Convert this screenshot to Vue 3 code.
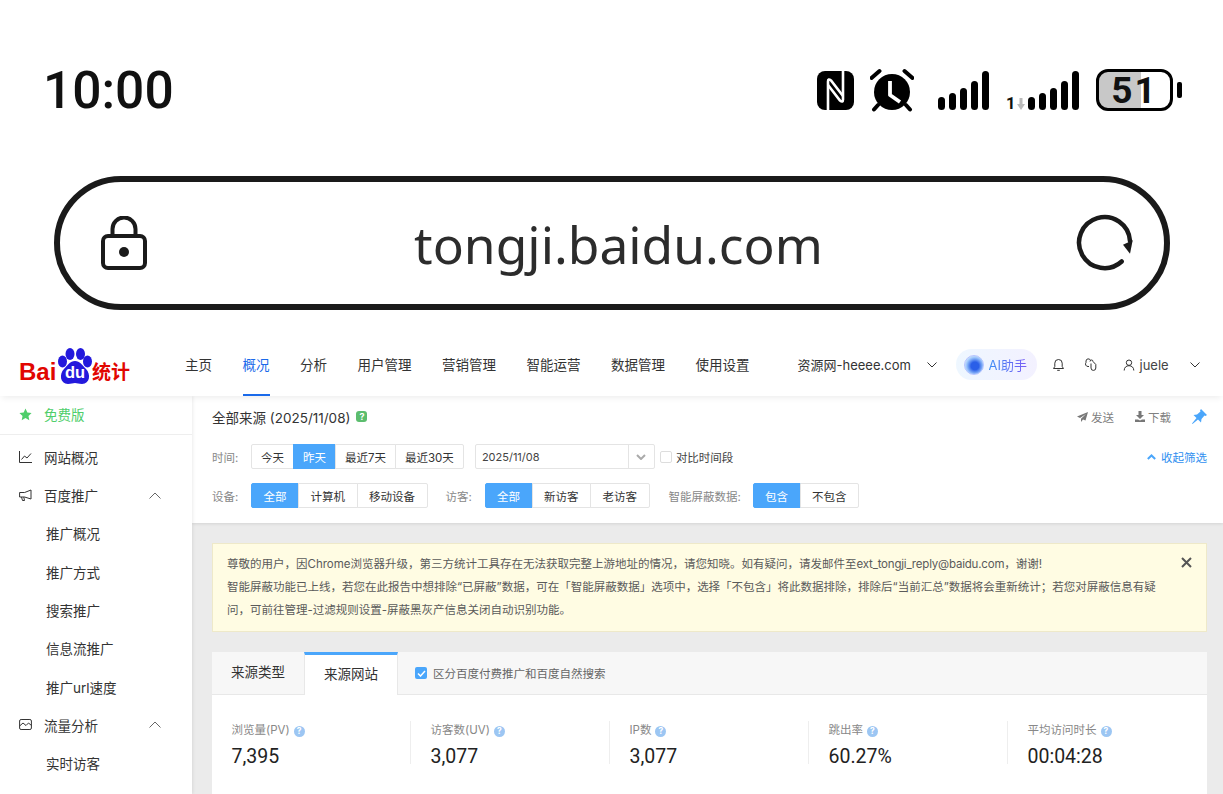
<template>
  <div class="page">
    <div class="status">
      <span class="time">10:00</span>
      <div class="status-icons">
        <svg class="nfc" width="37" height="39" viewBox="0 0 37 39">
          <rect width="37" height="39" rx="8" fill="#000" />
          <path d="M11 39V10.500Q11 7 14 9.500L26 25" fill="none" stroke="#fff" stroke-width="2.600" />
          <path d="M26 0V28.500Q26 32 23 29.500L11 14" fill="none" stroke="#fff" stroke-width="2.600" />
        </svg>
        <svg class="alarm" width="44" height="44" viewBox="0 0 44 44">
          <circle cx="22" cy="24" r="18" fill="#000" />
          <path d="M20 13v14l10 7" fill="none" stroke="#fff" stroke-width="3.800" stroke-linejoin="round" />
          <path d="M1.500 10 9.500 3M42.500 10 34.500 3M8 37l-4 4.500M36 37l4 4.500" stroke="#000" stroke-width="4" stroke-linecap="round" />
        </svg>
        <svg class="signal" width="52" height="42" viewBox="0 0 52 42">
          <rect v-for="b in bars" :key="b.x" :x="b.x" :y="b.y" width="7" :height="41 - b.y" rx="3.500" />
        </svg>
        <div class="signal2">
          <span class="net">1<svg width="8" height="12" viewBox="0 0 8 12"><path d="M2.500 0h3v6H8L4 12 0 6h2.500z" fill="#bbb" /></svg></span>
          <svg width="52" height="42" viewBox="0 0 52 42">
            <rect v-for="b in bars" :key="b.x" :x="b.x" :y="b.y" width="7" :height="41 - b.y" rx="3.500" />
          </svg>
        </div>
        <div class="battery"><span>51</span></div>
        <div class="nub"></div>
      </div>
    </div>

    <div class="urlbar">
      <svg width="46" height="54" viewBox="0 0 46 54" fill="none" stroke="#1a1a1a" stroke-width="4">
        <path d="M11.500 20V13a11.500 11.500 0 0 1 23 0v7" />
        <rect x="2" y="20" width="42" height="32" rx="5" />
        <circle cx="23" cy="36" r="5" fill="#1a1a1a" stroke="none" />
      </svg>
      <span class="host">tongji.baidu.com</span>
      <svg width="60" height="58" viewBox="0 0 60 58" fill="none" stroke="#1a1a1a" stroke-width="4.500">
        <path d="M45.700 47.500A25.500 25.500 0 1 1 54 27" stroke-linecap="round" />
        <path d="M47 30.700 56.700 26.300 54 39.700z" fill="#1a1a1a" stroke="none" />
      </svg>
    </div>

    <header class="nav">
      <div class="logo">
        <span class="logo-bai">Bai</span>
        <div class="paw">
          <svg width="34" height="36" viewBox="0 0 34 36" fill="#2319dc">
            <ellipse cx="4.500" cy="13.500" rx="4.500" ry="6" />
            <ellipse cx="12" cy="6" rx="4.500" ry="6" />
            <ellipse cx="22.500" cy="6" rx="4.500" ry="6" />
            <ellipse cx="29.500" cy="13.500" rx="4.500" ry="6" />
            <path d="M17 13c5 0 7 4 11 8 5 5 4 15-4 15-3 0-5-1-7-1s-4 1-7 1c-8 0-9-10-4-15 4-4 6-8 11-8z" />
          </svg>
          <span class="logo-du">du</span>
        </div>
        <span class="logo-tj">统计</span>
      </div>
      <nav class="menu">
        <a v-for="m in menu" :key="m" :class="{ active: m === '概况' }">{{ m }}</a>
      </nav>
      <div class="nav-right">
        <span class="site">资源网-heeee.com</span>
        <svg class="chev" width="10" height="6" viewBox="0 0 10 6"><path d="M.5.500 5 5 9.500.5" /></svg>
        <div class="ai">
          <span class="ai-dot"></span>
          <span class="ai-text">AI助手</span>
        </div>
        <svg class="bell" width="13" height="13" viewBox="0 0 13 13" fill="none" stroke="#333">
          <path d="M1.500 10.500h10l-1.300-2V5.200a3.700 3.700 0 0 0-7.400 0v3.300zM5.200 12.300h2.600" />
        </svg>
        <svg class="link" width="12" height="13" viewBox="0 0 12 13" fill="none" stroke="#333">
          <path d="M4 8.500H3A2.500 2.500 0 0 1 1 4.500V3a2.300 2.300 0 0 1 4.500-.5" />
          <path d="M5 3.500a1.500 1.500 0 0 1 3 0l2.800 3v3.500a2.400 2.400 0 0 1-4.800 0V5.500" />
        </svg>
        <svg class="user" width="12" height="12" viewBox="0 0 12 12" fill="none" stroke="#333">
          <circle cx="6" cy="3.700" r="2.700" />
          <path d="M1.200 11.500c0-3 2-4.800 4.800-4.800s4.800 1.800 4.800 4.800" />
        </svg>
        <span class="uname">juele</span>
        <svg class="chev last" width="10" height="6" viewBox="0 0 10 6"><path d="M.5.500 5 5 9.500.5" /></svg>
      </div>
    </header>

    <div class="body">
      <aside class="side">
        <div class="free">
          <svg width="13" height="13" viewBox="0 0 24 24" fill="#4fce6b"><path d="m12 1 3.400 7.200 7.800 1-5.700 5.400 1.500 7.800-7-3.800-7 3.800 1.500-7.800L.8 9.200l7.800-1z" /></svg>
          <span>免费版</span>
        </div>
        <div class="side-list">
          <div class="side-item">
            <svg class="side-ic" width="13" height="13" viewBox="0 0 13 13"><path d="M.5 1v11.500H13M2.500 9.500 5.500 6l2.500 2L12 3.500" /></svg>
            网站概况
          </div>
          <div class="side-item">
            <svg class="side-ic" width="13" height="13" viewBox="0 0 13 13"><path d="M.6 3.500h5L12 1v9L5.600 8H.6zM2.500 8l1 3.500h2L4.800 8" /></svg>
            百度推广
            <svg class="up" width="12" height="7" viewBox="0 0 12 7"><path d="M.5 6.500 6 1l5.500 5.500" /></svg>
          </div>
          <div v-for="s in promo" :key="s" class="side-sub">{{ s }}</div>
          <div class="side-item">
            <svg class="side-ic" width="13" height="13" viewBox="0 0 13 13"><rect x=".6" y="1.500" width="11.800" height="10" rx="1.500" /><path d="M.6 8 4 5l3 2.500L9.500 5l3 2.500" /></svg>
            流量分析
            <svg class="up" width="12" height="7" viewBox="0 0 12 7"><path d="M.5 6.500 6 1l5.500 5.500" /></svg>
          </div>
          <div class="side-sub">实时访客</div>
        </div>
      </aside>

      <main class="main">
        <section class="filters">
          <div class="title-row">
            <span class="title">全部来源 (2025/11/08)</span>
            <span class="help-green">?</span>
            <div class="actions">
              <span class="act">
                <svg width="11" height="10" viewBox="0 0 11 10" fill="#777"><path d="M11 0 0 4.500l3 1.500L9 2 4 6.700V10l2-2.500 2.500 1z" /></svg>
                发送
              </span>
              <span class="act">
                <svg width="10" height="11" viewBox="0 0 10 11" fill="#777"><path d="M3.500 0h3v4H9L5 8 1 4h2.500zM0 8.500h3l2 1 2-1h3V11H0z" /></svg>
                下载
              </span>
              <svg class="pin" width="16" height="16" viewBox="0 0 16 16" fill="#4aa6fb"><path d="M10 0l6 6-1.500 1-1-.5L10.500 10l-.5 3.500L7 10.500 1.500 15 1 14.500 5.500 9 2.500 6 6 5.500l3.500-3-.5-1z" /></svg>
            </div>
          </div>

          <div class="row first">
            <span class="lab">时间:</span>
            <div class="group">
              <button v-for="t in times" :key="t" class="tight" :class="{ on: t === '昨天' }">{{ t }}</button>
            </div>
            <div class="date">
              <span>2025/11/08</span>
              <i class="date-arrow"><svg width="10" height="6" viewBox="0 0 10 6"><path d="M1 1l4 4 4-4" /></svg></i>
            </div>
            <span class="check"></span>
            <span class="check-label">对比时间段</span>
            <span class="collapse">
              <svg width="9" height="6" viewBox="0 0 9 6"><path d="M.8 5 4.500 1.500 8.200 5" /></svg>
              收起筛选
            </span>
          </div>

          <div class="row">
            <span class="lab">设备:</span>
            <div class="group">
              <button v-for="t in devices" :key="t" :class="{ on: t === '全部' }">{{ t }}</button>
            </div>
            <span class="lab lab2">访客:</span>
            <div class="group">
              <button v-for="t in visitors" :key="t" :class="{ on: t === '全部' }">{{ t }}</button>
            </div>
            <span class="lab lab3">智能屏蔽数据:</span>
            <div class="group">
              <button v-for="t in blocks" :key="t" :class="{ on: t === '包含' }">{{ t }}</button>
            </div>
          </div>
        </section>

        <div class="content">
          <div class="notice">
            <p>
              尊敬的用户，因Chrome浏览器升级，第三方统计工具存在无法获取完整上游地址的情况，请您知晓。如有疑问，请发邮件至<span class="mail">ext_tongji_reply@baidu.com</span>，谢谢!<br />
              智能屏蔽功能已上线，若您在此报告中想排除“已屏蔽”数据，可在「智能屏蔽数据」选项中，选择「不包含」将此数据排除，排除后“当前汇总”数据将会重新统计；若您对屏蔽信息有疑<br />
              问，可前往管理-过滤规则设置-屏蔽黑灰产信息关闭自动识别功能。
            </p>
            <svg class="close" width="11" height="11" viewBox="0 0 11 11"><path d="M1 1l9 9M10 1l-9 9" /></svg>
          </div>

          <div class="card">
            <div class="tabs">
              <div class="tab">来源类型</div>
              <div class="tab cur">来源网站</div>
              <label class="tab-check">
                <span class="tick"><svg width="9" height="7" viewBox="0 0 9 7"><path d="M1 3.500 3.500 6 8 1" /></svg></span>
                区分百度付费推广和百度自然搜索
              </label>
            </div>
            <div class="metrics">
              <div v-for="m in metrics" :key="m.label" class="metric">
                <div class="m-label">{{ m.label }}<span class="help-blue">?</span></div>
                <div class="m-value">{{ m.value }}</div>
              </div>
            </div>
          </div>
        </div>
      </main>
    </div>
  </div>
</template>

<script setup>
const bars = [
  { x: 0, y: 28 },
  { x: 11, y: 24 },
  { x: 22, y: 19 },
  { x: 33, y: 12 },
  { x: 44, y: 2 },
]
const menu = ['主页', '概况', '分析', '用户管理', '营销管理', '智能运营', '数据管理', '使用设置']
const promo = ['推广概况', '推广方式', '搜索推广', '信息流推广', '推广url速度']
const times = ['今天', '昨天', '最近7天', '最近30天']
const devices = ['全部', '计算机', '移动设备']
const visitors = ['全部', '新访客', '老访客']
const blocks = ['包含', '不包含']
const metrics = [
  { label: '浏览量(PV)', value: '7,395' },
  { label: '访客数(UV)', value: '3,077' },
  { label: 'IP数', value: '3,077' },
  { label: '跳出率', value: '60.27%' },
  { label: '平均访问时长', value: '00:04:28' },
]
</script>

<style>
html, body { background: #fff; overflow: hidden; }
</style>

<style scoped>
.page {
  width: 1223px;
  height: 794px;
  overflow: hidden;
  font-family: Inter, "Noto Sans CJK SC", sans-serif;
  color: #333;
  background: #fff;
}
.status {
  height: 176px;
  display: flex;
  align-items: center;
  justify-content: space-between;
  padding: 4px 41px 0 43px;
  box-sizing: border-box;
}
.time { font: 500 51.500px Roboto, sans-serif; color: #111; }
.status-icons { display: flex; align-items: center; }
.alarm { margin-left: 16px; }
.signal { margin-left: 24px; fill: #000; }
.signal2 { display: flex; align-items: flex-end; margin-left: 16px; fill: #000; }
.net {
  font: 700 16.500px Roboto, sans-serif;
  display: flex;
  align-items: flex-end;
  line-height: 12px;
  margin-bottom: 1px;
  gap: 2px;
  width: 22px;
  color: #111;
}
.battery {
  width: 77px;
  height: 42px;
  box-sizing: border-box;
  margin-left: 16px;
  border: 3.500px solid #000;
  border-radius: 12px;
  background: linear-gradient(90deg, #c8c8c8 59%, #fff 59%);
  display: flex;
  align-items: center;
  justify-content: center;
  font: 700 37px/1 Roboto, sans-serif;
  color: #111;
  letter-spacing: 2px;
}
.nub { width: 5px; height: 16px; background: #000; border-radius: 2px; margin-left: 4px; }

.urlbar {
  height: 134px;
  margin: 0 53px 0 54px;
  box-sizing: border-box;
  border: 6px solid #1a1a1a;
  border-radius: 67px;
  display: flex;
  align-items: center;
  justify-content: space-between;
  padding: 0 28px 0 41px;
}
.host {
  font: 400 51.500px "Noto Sans", sans-serif;
  color: #2c2c2c;
  margin: 2px 0 0 14px;
}

.nav {
  height: 60px;
  margin-top: 26px;
  display: flex;
  align-items: flex-start;
  position: relative;
  box-shadow: 0 4px 6px -2px rgba(0, 0, 0, 0.07);
  z-index: 2;
  background: #fff;
}
.logo {
  display: flex;
  align-items: flex-end;
  height: 48px;
  width: 185px;
  padding-left: 19px;
  box-sizing: border-box;
  flex: none;
  color: #e10601;
}
.logo-bai { font: 700 24px/25px "Liberation Sans", sans-serif; width: 39px; }
.paw { position: relative; width: 34px; height: 36px; flex: none; }
.logo-du {
  position: absolute;
  left: 6px;
  top: 16px;
  width: 22px;
  text-align: center;
  color: #fff;
  font: 700 16.500px/17px "Liberation Sans", sans-serif;
}
.logo-tj { font: 700 19px/26px "Noto Sans CJK SC", sans-serif; }
.menu {
  display: flex;
  gap: 30.500px;
  font-size: 13.500px;
  height: 60px;
}
.menu a {
  padding-top: 19px;
  line-height: 20px;
  height: 60px;
  box-sizing: border-box;
  color: #333;
  white-space: nowrap;
}
.menu a.active {
  color: #1a6aea;
  border-bottom: 2px solid #1a6aea;
}
.nav-right {
  display: flex;
  align-items: center;
  height: 57px;
  margin-left: 48px;
  flex: none;
}
.site { font-size: 13px; color: #333; white-space: nowrap; width: 113px; }
.chev { fill: none; stroke: #333; margin-left: 16px; }
.chev.last { margin-left: 22px; }
.ai {
  margin-left: 19px;
  width: 81px;
  height: 31px;
  border-radius: 16px;
  background: linear-gradient(90deg, #eef7ff, #f3f1ff);
  display: flex;
  align-items: center;
  padding-left: 8px;
  box-sizing: border-box;
  gap: 5px;
}
.ai-dot {
  width: 20px;
  height: 20px;
  flex: none;
  box-sizing: border-box;
  border-radius: 50%;
  border: 1.500px solid #b6c4ff;
  background: radial-gradient(circle at 55% 55%, #2a5fe8 0 28%, #9cc6fb 60%, #fff 90%);
}
.ai-text {
  font-size: 13px;
  background: linear-gradient(90deg, #3d8df5, #7a5cf5);
  -webkit-background-clip: text;
  background-clip: text;
  color: transparent;
  white-space: nowrap;
}
.bell { margin-left: 15px; }
.link { margin-left: 20px; }
.user { margin-left: 26px; }
.uname { font-size: 13px; margin-left: 5px; color: #444; width: 28px; }

.body { display: flex; height: 398px; }
.side {
  width: 192px;
  flex: none;
  background: #fff;
  box-shadow: 1px 0 3px rgba(0, 0, 0, 0.08);
  font-size: 13.500px;
  color: #333;
  z-index: 1;
}
.free {
  height: 36px;
  display: flex;
  align-items: center;
  gap: 12px;
  padding: 0 0 2px 19px;
  color: #4fce6b;
  border-bottom: 1px solid #eee;
}
.side-list { padding-top: 2.600px; }
.side-item, .side-sub {
  height: 38.300px;
  display: flex;
  align-items: center;
  white-space: nowrap;
}
.side-item { padding-left: 19px; }
.side-sub { padding-left: 46px; }
.side-ic { fill: none; stroke: #333; margin-right: 12px; flex: none; }
.up { fill: none; stroke: #666; margin-left: 51px; }

.main { flex: 1; background: #ebebeb; min-width: 0; }
.filters {
  height: 127px;
  background: #fff;
  padding: 0 16px 0 20px;
  box-sizing: border-box;
  box-shadow: 0 1px 3px rgba(0, 0, 0, 0.1);
}
.title-row { height: 41px; display: flex; align-items: center; }
.title { font-size: 13.500px; color: #333; white-space: nowrap; margin-right: 6px; }
.help-green {
  width: 11px;
  height: 11px;
  border-radius: 3px;
  background: #5cbd6e;
  color: #fff;
  font-size: 9px;
  line-height: 11px;
  text-align: center;
  font-weight: 700;
}
.actions { margin-left: auto; display: flex; align-items: center; font-size: 11.500px; color: #808080; }
.act { display: flex; align-items: center; gap: 3px; margin-right: 21px; }
.act:nth-child(2) { margin-right: 20px; }
.row { display: flex; align-items: center; height: 25px; margin-top: 14px; font-size: 11.500px; }
.row.first { margin-top: 7px; }
.lab { color: #888; width: 39px; flex: none; white-space: nowrap; }
.lab2 { margin-left: 18px; }
.lab3 { margin-left: 19px; width: 84px; }
.group { display: flex; height: 25px; flex: none; }
.group button {
  height: 25px;
  padding: 0 11.500px;
  border: 1px solid #e4e4e4;
  margin-left: -1px;
  background: #fff;
  font: inherit;
  color: #333;
  white-space: nowrap;
  box-sizing: border-box;
}
.group button:first-child { margin-left: 0; border-radius: 2px 0 0 2px; }
.group button:last-child { border-radius: 0 2px 2px 0; }
.group button.tight { padding: 0 9px; }
.group button.on { background: #4aa6fb; border-color: #4aa6fb; color: #fff; }
.date {
  margin-left: 11px;
  width: 180px;
  height: 25px;
  box-sizing: border-box;
  border: 1px solid #e4e4e4;
  border-radius: 2px;
  display: flex;
  align-items: center;
  padding-left: 6px;
  color: #444;
  font-size: 11px;
}
.date-arrow {
  margin-left: auto;
  width: 25px;
  height: 23px;
  border-left: 1px solid #e4e4e4;
  display: flex;
  align-items: center;
  justify-content: center;
}
.date-arrow svg { fill: none; stroke: #aaa; stroke-width: 2; }
.check {
  width: 12px;
  height: 12px;
  box-sizing: border-box;
  border: 1px solid #ddd;
  border-radius: 2px;
  margin-left: 5px;
}
.check-label { margin-left: 4px; color: #444; white-space: nowrap; }
.collapse {
  margin-left: auto;
  color: #2f8ff0;
  display: flex;
  align-items: center;
  gap: 5px;
  white-space: nowrap;
}
.collapse svg { fill: none; stroke: #4aa6fb; stroke-width: 2; }

.content { padding: 20px 16px 0 20px; }
.notice {
  height: 89px;
  box-sizing: border-box;
  background: #fffce3;
  border: 1px solid #eee9c9;
  padding: 9px 14px 0;
  position: relative;
  font-size: 11.500px;
  line-height: 23px;
  color: #5a5a5a;
}
.notice p { margin: 0; white-space: nowrap; }
.mail { letter-spacing: -0.2px; }
.close { position: absolute; right: 14px; top: 13px; fill: none; stroke: #555; stroke-width: 2; }
.card { margin-top: 20px; background: #fff; }
.tabs {
  height: 43px;
  display: flex;
  background: #f7f7f7;
  border-bottom: 1px solid #e8e8e8;
  box-sizing: border-box;
  font-size: 13.500px;
}
.tab { width: 92px; height: 42px; line-height: 40px; text-align: center; color: #333; flex: none; }
.tab.cur {
  width: 94px;
  height: 43px;
  background: #fff;
  border-top: 3px solid #4aa6fb;
  border-left: 1px solid #e8e8e8;
  border-right: 1px solid #e8e8e8;
  box-sizing: border-box;
  line-height: 38px;
}
.tab-check {
  display: flex;
  align-items: center;
  margin-left: 17px;
  gap: 6px;
  font-size: 11.500px;
  color: #666;
  white-space: nowrap;
}
.tick {
  width: 12px;
  height: 12px;
  border-radius: 2px;
  background: #4aa6fb;
  display: flex;
  align-items: center;
  justify-content: center;
}
.tick svg { fill: none; stroke: #fff; stroke-width: 1.500; }
.metrics { display: flex; padding-top: 26px; height: 99px; box-sizing: border-box; }
.metric {
  width: 199px;
  height: 43px;
  box-sizing: border-box;
  padding-left: 19.500px;
  border-right: 1px solid #eee;
  flex: none;
}
.metric:last-child { border-right: 0; }
.m-label { font-size: 11.500px; color: #888; line-height: 18px; white-space: nowrap; }
.help-blue {
  display: inline-block;
  width: 11px;
  height: 11px;
  margin-left: 4px;
  border-radius: 50%;
  background: #9cc6f3;
  color: #fff;
  font-size: 8.500px;
  line-height: 11px;
  text-align: center;
  font-weight: 700;
}
.m-value { font: 400 19.500px/28px Roboto, sans-serif; color: #222; margin-top: 4px; }
</style>
